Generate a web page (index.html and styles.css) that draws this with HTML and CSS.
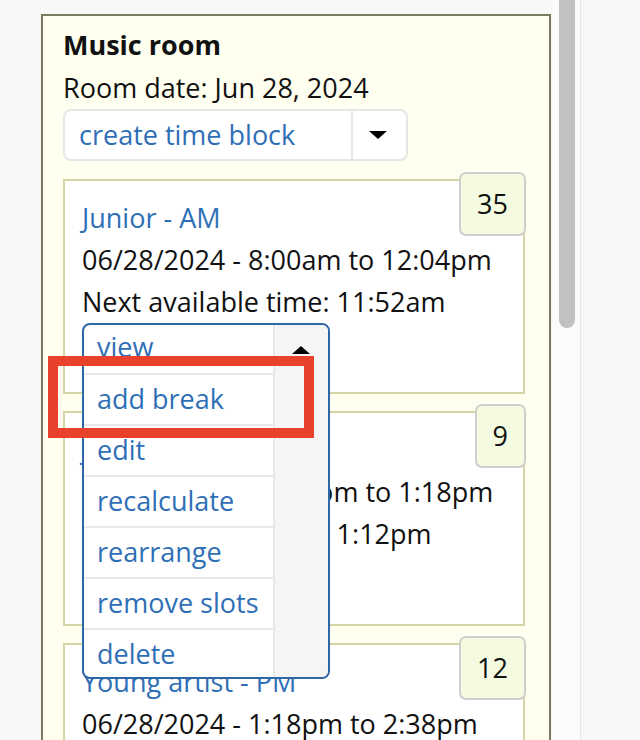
FILE: index.html
```html
<!DOCTYPE html>
<html lang="en">
<head>
<meta charset="utf-8">
<title>Music room</title>
<link rel="stylesheet" href="styles.css">
</head>
<body>
<div class="page">
  <section class="room">
    <h2 class="room-title">Music room</h2>
    <p class="room-date">Room date: Jun 28, 2024</p>
    <div class="btn-group">
      <a class="btn-main" href="#">create time block</a>
      <span class="btn-toggle"><span class="caret-down"></span></span>
    </div>

    <div class="card">
      <span class="badge">35</span>
      <a class="card-title" href="#">Junior - AM</a>
      <p class="line">06/28/2024 - 8:00am to 12:04pm</p>
      <p class="line">Next available time: 11:52am</p>
      <div class="dd">
        <div class="dd-menu">
          <ul class="dd-list">
            <li><a href="#">view</a></li>
            <li><a href="#">add break</a></li>
            <li><a href="#">edit</a></li>
            <li><a href="#">recalculate</a></li>
            <li><a href="#">rearrange</a></li>
            <li><a href="#">remove slots</a></li>
            <li><a href="#">delete</a></li>
          </ul>
          <span class="dd-toggle"><span class="caret-up"></span></span>
        </div>
        <div class="highlight"></div>
      </div>
    </div>

    <div class="card">
      <span class="badge">9</span>
      <a class="card-title" href="#">Junior - PM</a>
      <p class="line">06/28/2024 - 12:04pm to 1:18pm</p>
      <p class="line">Next available time: 1:12pm</p>
      <div class="dd-closed">
        <a class="dd-closed-main" href="#">view</a>
        <span class="dd-closed-toggle"><span class="caret-down"></span></span>
      </div>
    </div>

    <div class="card">
      <span class="badge">12</span>
      <a class="card-title" href="#">Young artist - PM</a>
      <p class="line">06/28/2024 - 1:18pm to 2:38pm</p>
      <p class="line">Next available time: 2:38pm</p>
      <div class="dd-closed">
        <a class="dd-closed-main" href="#">view</a>
        <span class="dd-closed-toggle"><span class="caret-down"></span></span>
      </div>
    </div>
  </section>
  <div class="scrollbar"><div class="thumb"></div></div>
</div>
</body>
</html>
```

FILE: styles.css
```css
html, body {
  margin: 0;
  padding: 0;
  overflow: hidden;
  background: #f7f7f7;
}

body {
  font-family: "Open Sans", "Noto Sans", "DejaVu Sans", sans-serif;
  font-size: 27px;
  line-height: 42px;
  color: #111;
}

a {
  color: #2f6fb6;
  text-decoration: none;
}

.page {
  display: flex;
  align-items: flex-start;
  height: 740px;
  overflow: hidden;
}

.room {
  box-sizing: border-box;
  width: 510px;
  margin: 14px 0 0 41px;
  padding: 7px 24px 40px 20px;
  border: 2px solid #7b7a5d;
  background: #fffff0;
}

.room-title {
  margin: 0;
  font-size: 27px;
  font-weight: 700;
  line-height: 44px;
}

.room-date {
  margin: 0;
}

.btn-group {
  display: flex;
  width: 345px;
  box-sizing: border-box;
  border: 2px solid #e6e6e6;
  border-radius: 8px;
  background: #fff;
  margin-bottom: 18px;
}

.btn-main {
  display: block;
  width: 286px;
  box-sizing: border-box;
  padding: 3px 14px;
}

.btn-toggle {
  display: flex;
  align-items: center;
  justify-content: center;
  width: 55px;
  box-sizing: border-box;
  border-left: 2px solid #e6e6e6;
  padding-right: 3px;
}

.caret-down {
  width: 0;
  height: 0;
  border-left: 9px solid transparent;
  border-right: 9px solid transparent;
  border-top: 8px solid #000;
}

.caret-up {
  width: 0;
  height: 0;
  border-left: 9px solid transparent;
  border-right: 9px solid transparent;
  border-bottom: 8px solid #000;
}

.card {
  position: relative;
  box-sizing: border-box;
  width: 462px;
  padding: 16px 17px 18px 17px;
  border: 2px solid #d5d4a7;
  background: #fff;
  margin-bottom: 17px;
}

.badge {
  position: absolute;
  top: -9px;
  right: -3px;
  padding: 10px 16px;
  line-height: 40px;
  border: 2px solid #cfcfcf;
  border-radius: 7px;
  background: #f5fbe0;
  color: #111;
}

.card-title {
  display: block;
}

.line {
  margin: 0;
}

.dd {
  position: relative;
  width: 248px;
  height: 51px;
}

.dd-menu {
  position: absolute;
  top: 0;
  left: 0;
  z-index: 10;
  display: flex;
  width: 248px;
  box-sizing: border-box;
  border: 2px solid #2f66a6;
  border-radius: 8px;
  background: #fff;
  overflow: hidden;
}

.dd-list {
  flex: 1;
  margin: 0;
  padding: 0;
  list-style: none;
}

.dd-list li {
  padding: 3px 13px 5px;
  line-height: 41px;
  border-bottom: 2px solid #e8e8e8;
}

.dd-list li:first-child {
  padding-top: 1px;
  padding-bottom: 6px;
}

.dd-list li:last-child {
  padding-bottom: 3px;
  border-bottom: none;
}

.dd-list a {
  display: block;
}

.dd-toggle {
  display: flex;
  justify-content: center;
  align-items: flex-start;
  width: 55px;
  box-sizing: border-box;
  padding: 21px 2px 0 0;
  border-left: 2px solid #e8e8e8;
  background: #f5f5f5;
}

.highlight {
  position: absolute;
  left: -34px;
  top: 33px;
  width: 266px;
  height: 82px;
  box-sizing: border-box;
  border: 10px solid #e9412c;
  z-index: 20;
  pointer-events: none;
}

.dd-closed {
  display: flex;
  width: 248px;
  height: 51px;
  box-sizing: border-box;
  border: 2px solid #e6e6e6;
  border-radius: 8px;
  background: #fff;
}

.dd-closed-main {
  flex: 1;
  padding: 1px 13px;
  line-height: 41px;
}

.dd-closed-toggle {
  display: flex;
  align-items: center;
  justify-content: center;
  width: 55px;
  box-sizing: border-box;
  border-left: 2px solid #e6e6e6;
}

.scrollbar {
  box-sizing: border-box;
  width: 29px;
  height: 740px;
  margin-left: 1px;
  background: #fbfbfb;
  border-right: 1px solid #e6e6e6;
}

.thumb {
  width: 16px;
  height: 328px;
  margin-left: 7px;
  background: #c1c1c1;
  border-radius: 0 0 8px 8px;
}
```
